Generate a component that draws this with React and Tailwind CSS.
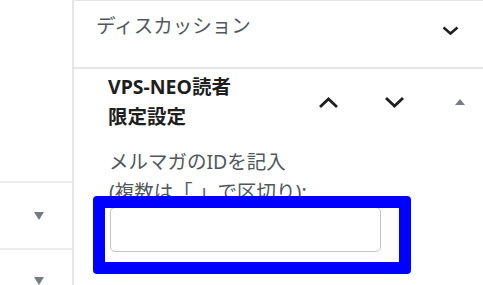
export default function App() {
  const font = { fontFamily: '"Noto Sans", "Noto Sans CJK JP", sans-serif' };
  return (
    <div className="w-[483px] h-[285px] overflow-hidden bg-white flex" style={font}>
      {/* left column */}
      <div className="w-[74px] shrink-0 border-r-2 border-[#e6e6e6] flex flex-col">
        <div className="h-[183px] shrink-0 border-b-2 border-[#ececec]" />
        <div className="h-[67px] shrink-0 border-b-2 border-[#ececec] flex items-center justify-center pl-[6px]">
          <svg width="10" height="8" viewBox="0 0 10 8"><polygon points="0,0 10,0 5,8" fill="#787c82" /></svg>
        </div>
        <div className="flex justify-center pt-[27px] pl-[6px]">
          <svg width="10" height="8" viewBox="0 0 10 8"><polygon points="0,0 10,0 5,8" fill="#787c82" /></svg>
        </div>
      </div>

      {/* right panel */}
      <div className="flex-1 flex flex-col">
        <div className="h-[69px] shrink-0 border-t border-b-2 border-[#e6e6e6] flex justify-between pl-[22px] pr-[23px] pt-[10px]">
          <div className="text-[19.5px] leading-[30px] text-[#50575e]">ディスカッション</div>
          <div className="h-[30px] mt-[4px] flex items-center">
            <svg width="19" height="11" viewBox="0 0 19 11">
              <polyline points="2.5,2.5 9.5,8.5 16.5,2.5" fill="none" stroke="#1e1e1e" strokeWidth="2.5" />
            </svg>
          </div>
        </div>

        <div className="flex flex-col pt-[3px]">
          <div className="flex items-center pl-[34px] pr-[1px]">
            <div className="flex-1 text-[19.5px] leading-[30px] font-bold text-[#1e1e1e]">
              VPS-NEO読者
              <br />
              限定設定
            </div>
            <div className="flex gap-[22px]">
              <div className="w-[44px] h-[30px] flex items-center justify-center">
                <svg width="23" height="13" viewBox="0 0 23 13">
                  <polyline points="3,11 11.5,3 20,11" fill="none" stroke="#1e1e1e" strokeWidth="2.8" />
                </svg>
              </div>
              <div className="w-[44px] h-[30px] flex items-center justify-center">
                <svg width="23" height="13" viewBox="0 0 23 13">
                  <polyline points="3,2 11.5,10 20,2" fill="none" stroke="#1e1e1e" strokeWidth="2.8" />
                </svg>
              </div>
              <div className="w-[44px] h-[30px] flex items-center justify-center">
                <svg width="10" height="6" viewBox="0 0 10 6"><polygon points="0,6 10,6 5,0" fill="#787c82" /></svg>
              </div>
            </div>
          </div>

          <div className="pl-[35px] mt-[15px] text-[19.5px] leading-[30px] text-[#50575e]">
            メルマガのIDを記入
            <br />
            (複数は「,」で区切り):
          </div>
          <div className="pl-[36px]">
            <div className="relative w-[271px] h-[45px]">
              <div className="w-full h-full border-[1.5px] border-[#c3c4c7] rounded-[5px] bg-white" />
              <div className="absolute left-[-17px] top-[-11px] w-[318px] h-[78px] border-[12px] border-[#0000ff] rounded-[4px]" />
            </div>
          </div>
        </div>
      </div>
    </div>
  );
}
